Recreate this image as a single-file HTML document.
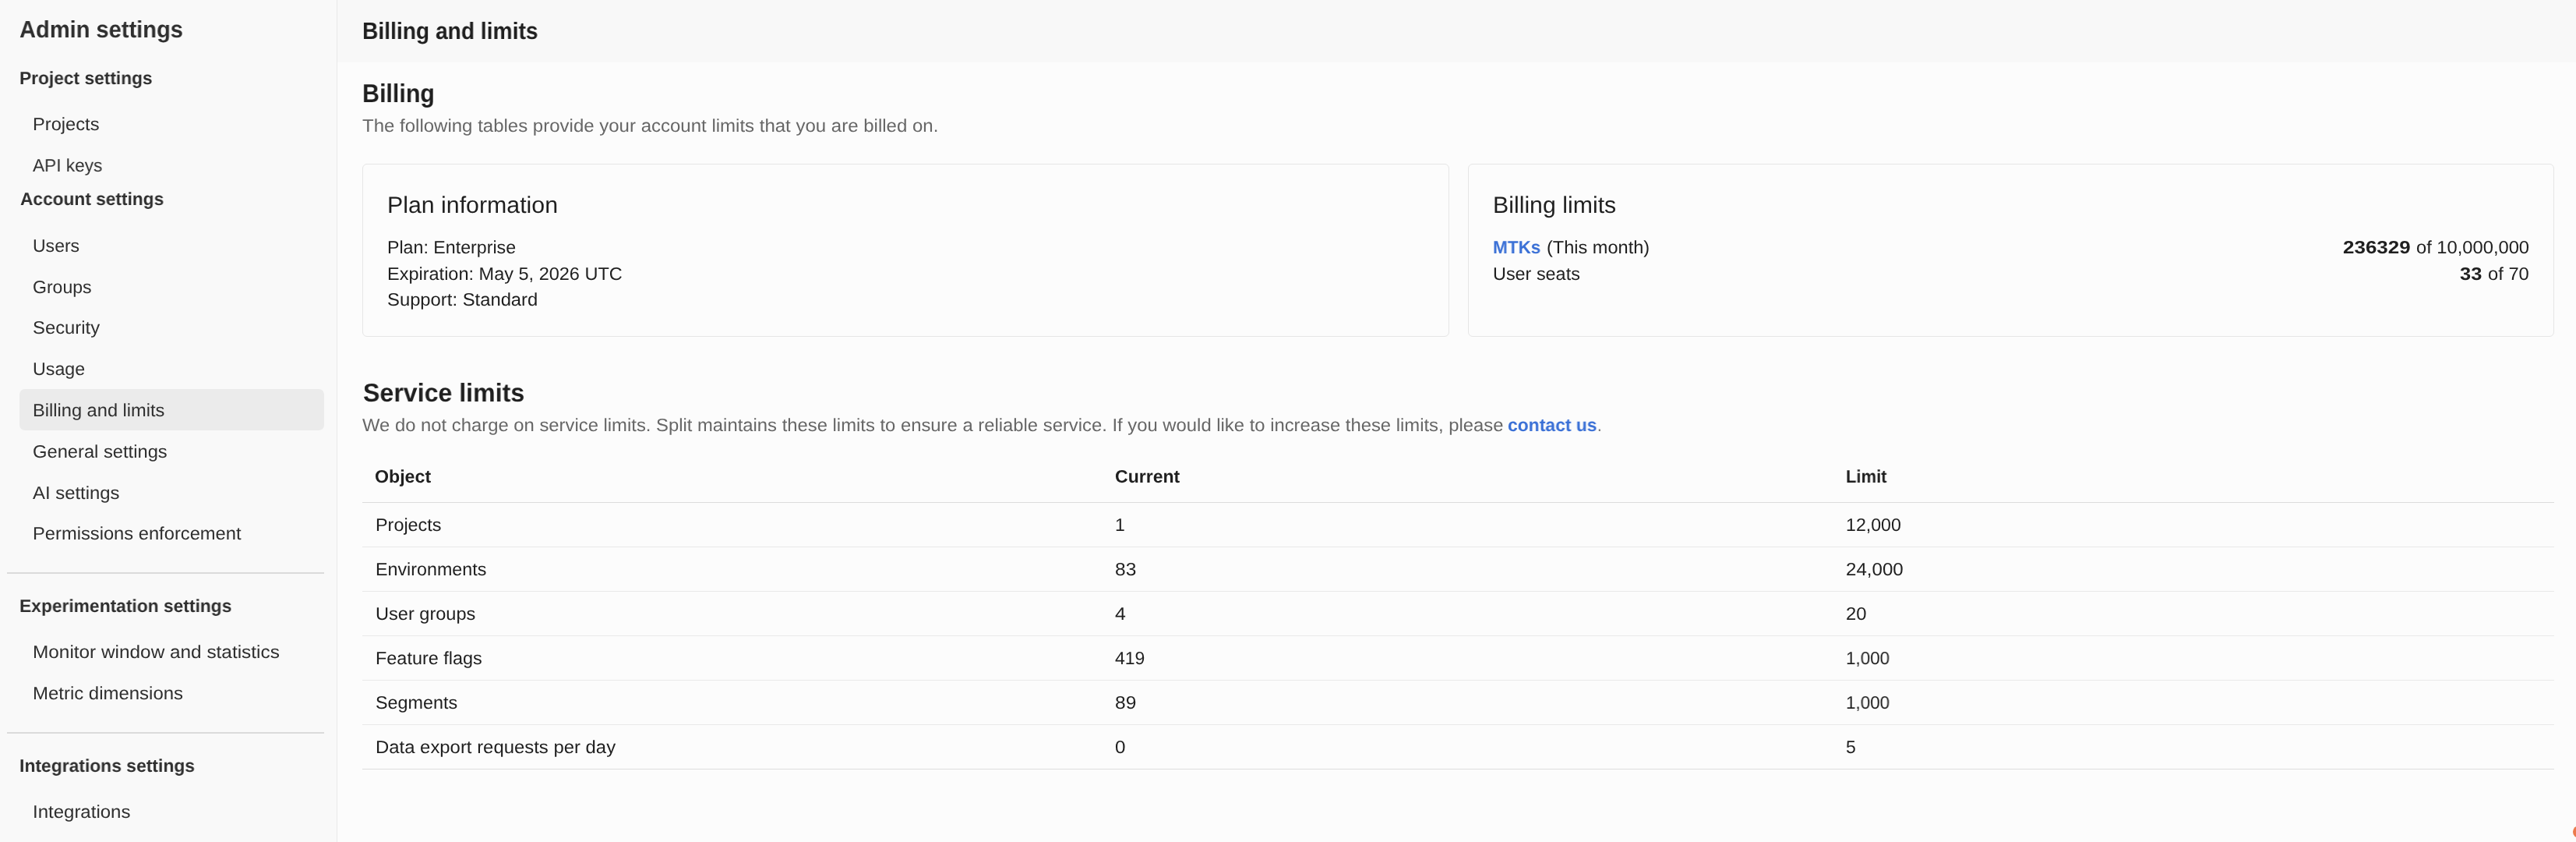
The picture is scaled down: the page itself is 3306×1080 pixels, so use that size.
<!DOCTYPE html>
<html><head><meta charset="utf-8">
<style>
html,body{margin:0;padding:0;width:3306px;height:1080px;overflow:hidden;background:#fcfcfc;font-family:"Liberation Sans",sans-serif;}
.t{position:absolute;white-space:nowrap;will-change:transform;text-rendering:geometricPrecision;line-height:1.0;transform-origin:0 0;}
.sb{position:absolute;left:0;top:0;width:432px;height:1080px;background:#f9f9f9;border-right:1px solid #e9e9e9;}
.hd{position:absolute;left:433px;top:0;width:2873px;height:80px;background:#f8f8f8;}
.act{position:absolute;left:25px;top:499px;width:391px;height:53px;background:#ebebeb;border-radius:7px;}
.dv{position:absolute;left:9px;width:407px;height:2px;background:#dbdbdb;}
.card{position:absolute;top:210px;height:220px;border:1px solid #e6e6e6;border-radius:6px;background:#fcfcfc;}
.hr{position:absolute;left:465px;width:2813px;height:1px;background:#e9e9e9;}
.dot{position:absolute;left:3302px;top:1059px;width:16px;height:16px;border-radius:50%;background:#ec7a4c;}
</style></head><body>
<div class="sb"></div>
<div class="hd"></div>
<div class="act"></div>
<div class="dv" style="top:734px"></div>
<div class="dv" style="top:939px"></div>
<div class="card" style="left:465px;width:1393px"></div>
<div class="card" style="left:1884px;width:1392px"></div>
<div class="hr" style="top:644px;background:#dcdcdc"></div>
<div class="hr" style="top:701px"></div>
<div class="hr" style="top:758px"></div>
<div class="hr" style="top:815px"></div>
<div class="hr" style="top:872px"></div>
<div class="hr" style="top:929px"></div>
<div class="hr" style="top:986px;background:#dcdcdc"></div>
<div class="dot"></div>
<div class="t" style="left:25.20px;top:22.65px;font-size:30.51px;font-weight:700;color:#2f2f2f;transform:scaleX(0.9530)">Admin settings</div>
<div class="t" style="left:25.20px;top:88.79px;font-size:23.02px;font-weight:700;color:#2f2f2f;transform:scaleX(0.9884)">Project settings</div>
<div class="t" style="left:41.60px;top:147.79px;font-size:23.02px;color:#2f2f2f;transform:scaleX(1.0286)">Projects</div>
<div class="t" style="left:41.60px;top:200.99px;font-size:23.02px;color:#2f2f2f;transform:scaleX(0.9840)">API keys</div>
<div class="t" style="left:25.80px;top:243.89px;font-size:23.02px;font-weight:700;color:#2f2f2f;transform:scaleX(0.9865)">Account settings</div>
<div class="t" style="left:42.20px;top:303.69px;font-size:23.02px;color:#2f2f2f;transform:scaleX(0.9983)">Users</div>
<div class="t" style="left:41.60px;top:356.69px;font-size:23.02px;color:#2f2f2f;transform:scaleX(1.0017)">Groups</div>
<div class="t" style="left:41.60px;top:408.89px;font-size:23.02px;color:#2f2f2f;transform:scaleX(1.0358)">Security</div>
<div class="t" style="left:41.60px;top:462.09px;font-size:23.02px;color:#2f2f2f;transform:scaleX(1.0090)">Usage</div>
<div class="t" style="left:41.60px;top:515.29px;font-size:23.02px;color:#2f2f2f;transform:scaleX(1.0268)">Billing and limits</div>
<div class="t" style="left:41.60px;top:568.49px;font-size:23.02px;color:#2f2f2f;transform:scaleX(1.0304)">General settings</div>
<div class="t" style="left:41.60px;top:620.69px;font-size:23.02px;color:#2f2f2f;transform:scaleX(1.0375)">AI settings</div>
<div class="t" style="left:41.60px;top:673.19px;font-size:23.02px;color:#2f2f2f;transform:scaleX(1.0304)">Permissions enforcement</div>
<div class="t" style="left:25.20px;top:765.89px;font-size:23.02px;font-weight:700;color:#2f2f2f;transform:scaleX(0.9904)">Experimentation settings</div>
<div class="t" style="left:41.60px;top:825.09px;font-size:23.02px;color:#2f2f2f;transform:scaleX(1.0584)">Monitor window and statistics</div>
<div class="t" style="left:41.60px;top:878.29px;font-size:23.02px;color:#2f2f2f;transform:scaleX(1.0406)">Metric dimensions</div>
<div class="t" style="left:25.20px;top:971.09px;font-size:23.02px;font-weight:700;color:#2f2f2f;transform:scaleX(0.9940)">Integrations settings</div>
<div class="t" style="left:41.60px;top:1029.69px;font-size:23.02px;color:#2f2f2f;transform:scaleX(1.0428)">Integrations</div>
<div class="t" style="left:465.20px;top:24.55px;font-size:30.51px;font-weight:700;color:#1f1f1f;transform:scaleX(0.9242)">Billing and limits</div>
<div class="t" style="left:465.20px;top:103.95px;font-size:33.10px;font-weight:700;color:#1f1f1f;transform:scaleX(0.9195)">Billing</div>
<div class="t" style="left:465.20px;top:149.99px;font-size:23.02px;color:#676767;transform:scaleX(1.0431)">The following tables provide your account limits that you are billed on.</div>
<div class="t" style="left:497.20px;top:248.53px;font-size:29.93px;color:#1f1f1f;transform:scaleX(1.0131)">Plan information</div>
<div class="t" style="left:497.20px;top:305.59px;font-size:23.02px;color:#1f1f1f;transform:scaleX(1.0078)">Plan: Enterprise</div>
<div class="t" style="left:497.20px;top:339.89px;font-size:23.02px;color:#1f1f1f;transform:scaleX(1.0212)">Expiration: May 5, 2026 UTC</div>
<div class="t" style="left:497.20px;top:372.79px;font-size:23.02px;color:#1f1f1f;transform:scaleX(1.0347)">Support: Standard</div>
<div class="t" style="left:1916.20px;top:248.53px;font-size:29.93px;color:#1f1f1f;transform:scaleX(1.0122)">Billing limits</div>
<div class="t" style="left:1916.20px;top:305.99px;font-size:23.02px;font-weight:700;color:#3a70d6;transform:scaleX(0.9788)">MTKs</div>
<div class="t" style="left:1985.20px;top:305.99px;font-size:23.02px;color:#1f1f1f;transform:scaleX(1.0230)">(This month)</div>
<div class="t" style="left:1916.20px;top:339.69px;font-size:23.02px;color:#1f1f1f;transform:scaleX(1.0166)">User seats</div>
<div class="t" style="left:3006.80px;top:305.79px;font-size:23.02px;font-weight:700;color:#1f1f1f;transform:scaleX(1.1283)">236329</div>
<div class="t" style="left:3100.70px;top:305.79px;font-size:23.02px;color:#1f1f1f;transform:scaleX(1.0304)">of 10,000,000</div>
<div class="t" style="left:3157.00px;top:339.59px;font-size:23.02px;font-weight:700;color:#1f1f1f;transform:scaleX(1.1044)">33</div>
<div class="t" style="left:3192.90px;top:339.59px;font-size:23.02px;color:#1f1f1f;transform:scaleX(1.0308)">of 70</div>
<div class="t" style="left:465.80px;top:488.25px;font-size:33.10px;font-weight:700;color:#1f1f1f;transform:scaleX(0.9709)">Service limits</div>
<div class="t" style="left:465.20px;top:533.79px;font-size:23.02px;color:#676767;transform:scaleX(1.0354)">We do not charge on service limits. Split maintains these limits to ensure a reliable service. If you would like to increase these limits, please</div>
<div class="t" style="left:1935.20px;top:533.79px;font-size:23.02px;font-weight:700;color:#3a70d6;transform:scaleX(0.9948)">contact us</div>
<div class="t" style="left:2049.70px;top:533.79px;font-size:23.02px;color:#676767;transform:scaleX(0.8627)">.</div>
<div class="t" style="left:481.20px;top:599.99px;font-size:23.02px;font-weight:700;color:#1f1f1f;transform:scaleX(1.0066)">Object</div>
<div class="t" style="left:1430.80px;top:599.89px;font-size:23.02px;font-weight:700;color:#1f1f1f;transform:scaleX(1.0012)">Current</div>
<div class="t" style="left:2368.80px;top:599.89px;font-size:23.02px;font-weight:700;color:#1f1f1f;transform:scaleX(0.9545)">Limit</div>
<div class="t" style="left:482.20px;top:661.59px;font-size:23.02px;color:#1f1f1f;transform:scaleX(1.0165)">Projects</div>
<div class="t" style="left:1430.80px;top:661.59px;font-size:23.02px;color:#1f1f1f;transform:scaleX(1.0000)">1</div>
<div class="t" style="left:2368.80px;top:661.59px;font-size:23.02px;color:#1f1f1f;transform:scaleX(1.0060)">12,000</div>
<div class="t" style="left:482.20px;top:718.59px;font-size:23.02px;color:#1f1f1f;transform:scaleX(1.0112)">Environments</div>
<div class="t" style="left:1430.80px;top:718.59px;font-size:23.02px;color:#1f1f1f;transform:scaleX(1.0654)">83</div>
<div class="t" style="left:2368.80px;top:718.59px;font-size:23.02px;color:#1f1f1f;transform:scaleX(1.0472)">24,000</div>
<div class="t" style="left:482.20px;top:775.59px;font-size:23.02px;color:#1f1f1f;transform:scaleX(1.0236)">User groups</div>
<div class="t" style="left:1430.80px;top:775.59px;font-size:23.02px;color:#1f1f1f;transform:scaleX(1.0824)">4</div>
<div class="t" style="left:2368.80px;top:775.59px;font-size:23.02px;color:#1f1f1f;transform:scaleX(1.0341)">20</div>
<div class="t" style="left:482.20px;top:832.59px;font-size:23.02px;color:#1f1f1f;transform:scaleX(1.0182)">Feature flags</div>
<div class="t" style="left:1430.80px;top:832.59px;font-size:23.02px;color:#1f1f1f;transform:scaleX(0.9902)">419</div>
<div class="t" style="left:2368.80px;top:832.59px;font-size:23.02px;color:#1f1f1f;transform:scaleX(0.9739)">1,000</div>
<div class="t" style="left:482.20px;top:889.59px;font-size:23.02px;color:#1f1f1f;transform:scaleX(1.0145)">Segments</div>
<div class="t" style="left:1430.80px;top:889.59px;font-size:23.02px;color:#1f1f1f;transform:scaleX(1.0654)">89</div>
<div class="t" style="left:2368.80px;top:889.59px;font-size:23.02px;color:#1f1f1f;transform:scaleX(0.9739)">1,000</div>
<div class="t" style="left:482.20px;top:946.59px;font-size:23.02px;color:#1f1f1f;transform:scaleX(1.0380)">Data export requests per day</div>
<div class="t" style="left:1430.80px;top:946.59px;font-size:23.02px;color:#1f1f1f;transform:scaleX(1.0510)">0</div>
<div class="t" style="left:2368.80px;top:946.59px;font-size:23.02px;color:#1f1f1f;transform:scaleX(0.9961)">5</div>
</body></html>
